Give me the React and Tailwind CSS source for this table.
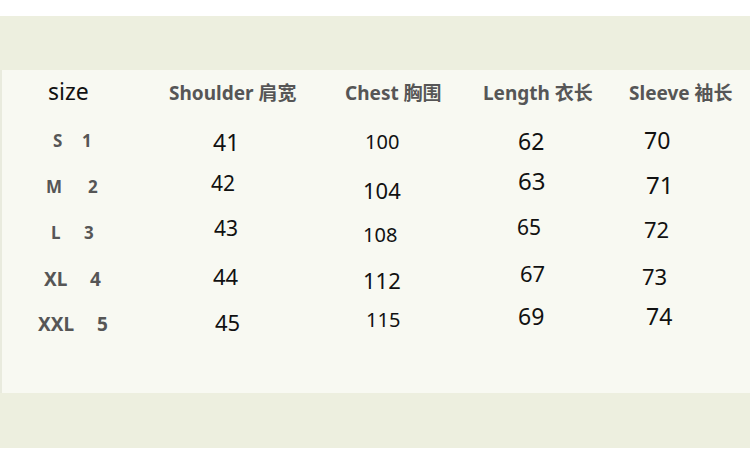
const headers = [
  { label: 'Shoulder 肩宽', pad: 'pl-[19px]' },
  { label: 'Chest 胸围', pad: 'pl-[35px]' },
  { label: 'Length 衣长', pad: 'pl-[23px]' },
  { label: 'Sleeve 袖长', pad: 'pl-[19px]' },
];

// each value carries its own nudge, the source chart is hand-placed
const rows = [
  {
    size: 'S', num: '1', lab: 'pl-[51px] pt-[14px] text-[17px]', gap: 'w-[29px]',
    cells: [
      { v: '41', cls: 'pl-[63px] pt-[13px] text-[23px]' },
      { v: '100', cls: 'pl-[55px] pt-[14px] text-[20px]' },
      { v: '62', cls: 'pl-[58px] pt-[12px] text-[23px]' },
      { v: '70', cls: 'pl-[34px] pt-[11px] text-[23px]' },
    ],
  },
  {
    size: 'M', num: '2', lab: 'pl-[44px] pt-[14px] text-[17px]', gap: 'w-[42px]',
    cells: [
      { v: '42', cls: 'pl-[61px] pt-[9px] text-[21px]' },
      { v: '104', cls: 'pl-[53px] pt-[15px] text-[22px]' },
      { v: '63', cls: 'pl-[58px] pt-[5px] text-[24px]' },
      { v: '71', cls: 'pl-[36px] pt-[9px] text-[24px]' },
    ],
  },
  {
    size: 'L', num: '3', lab: 'pl-[49px] pt-[14px] text-[17px]', gap: 'w-[33px]',
    cells: [
      { v: '43', cls: 'pl-[64px] pt-[8px] text-[21px]' },
      { v: '108', cls: 'pl-[53px] pt-[15px] text-[20px]' },
      { v: '65', cls: 'pl-[57px] pt-[7px] text-[21px]' },
      { v: '72', cls: 'pl-[34px] pt-[8px] text-[22px]' },
    ],
  },
  {
    size: 'XL', num: '4', lab: 'pl-[42px] pt-[14px] text-[19px]', gap: 'w-[46px]',
    cells: [
      { v: '44', cls: 'pl-[63px] pt-[9px] text-[22px]' },
      { v: '112', cls: 'pl-[53px] pt-[13px] text-[22px]' },
      { v: '67', cls: 'pl-[60px] pt-[6px] text-[22px]' },
      { v: '73', cls: 'pl-[32px] pt-[9px] text-[22px]' },
    ],
  },
  {
    size: 'XXL', num: '5', lab: 'pl-[36px] pt-[13px] text-[19px]', gap: 'w-[59px]',
    cells: [
      { v: '45', cls: 'pl-[65px] pt-[9px] text-[22px]' },
      { v: '115', cls: 'pl-[56px] pt-[8px] text-[20px]' },
      { v: '69', cls: 'pl-[58px] pt-[3px] text-[23px]' },
      { v: '74', cls: 'pl-[36px] pt-[3px] text-[23px]' },
    ],
  },
];

const colW = ['w-[160px]', 'w-[150px]', 'w-[150px]', 'w-[140px]'];

export default function App() {
  return (
    <div
      className="w-[750px] h-[464px] bg-white pt-[16px] overflow-hidden"
      style={{ fontFamily: '"Noto Sans", "Noto Sans CJK SC", sans-serif' }}
    >
      <div className="bg-[#edefdf] pt-[54px] pb-[55px]">
        <div className="bg-[#f8f9f2] border-l-2 border-[#e9ebde] pb-[45px]">
          {/* header */}
          <div className="flex h-[48px]">
            <div className="w-[148px] pl-[46px] pt-[10px] text-[23px] leading-none text-[#111]">size</div>
            {headers.map((h, i) => (
              <div key={h.label} className={`${colW[i]} ${h.pad} pt-[14px] text-[19px] leading-none font-bold text-[#565656] whitespace-nowrap`}>
                {h.label}
              </div>
            ))}
          </div>

          {/* rows */}
          {rows.map((r) => (
            <div key={r.size} className="flex h-[46px]">
              <div className={`w-[148px] flex ${r.lab} leading-none font-bold text-[#565656]`}>
                <span className={`inline-block ${r.gap}`}>{r.size}</span>
                <span>{r.num}</span>
              </div>
              {r.cells.map((c, i) => (
                <div key={i} className={`${colW[i]} ${c.cls} leading-none text-[#111]`}>
                  {c.v}
                </div>
              ))}
            </div>
          ))}
        </div>
      </div>
    </div>
  );
}
